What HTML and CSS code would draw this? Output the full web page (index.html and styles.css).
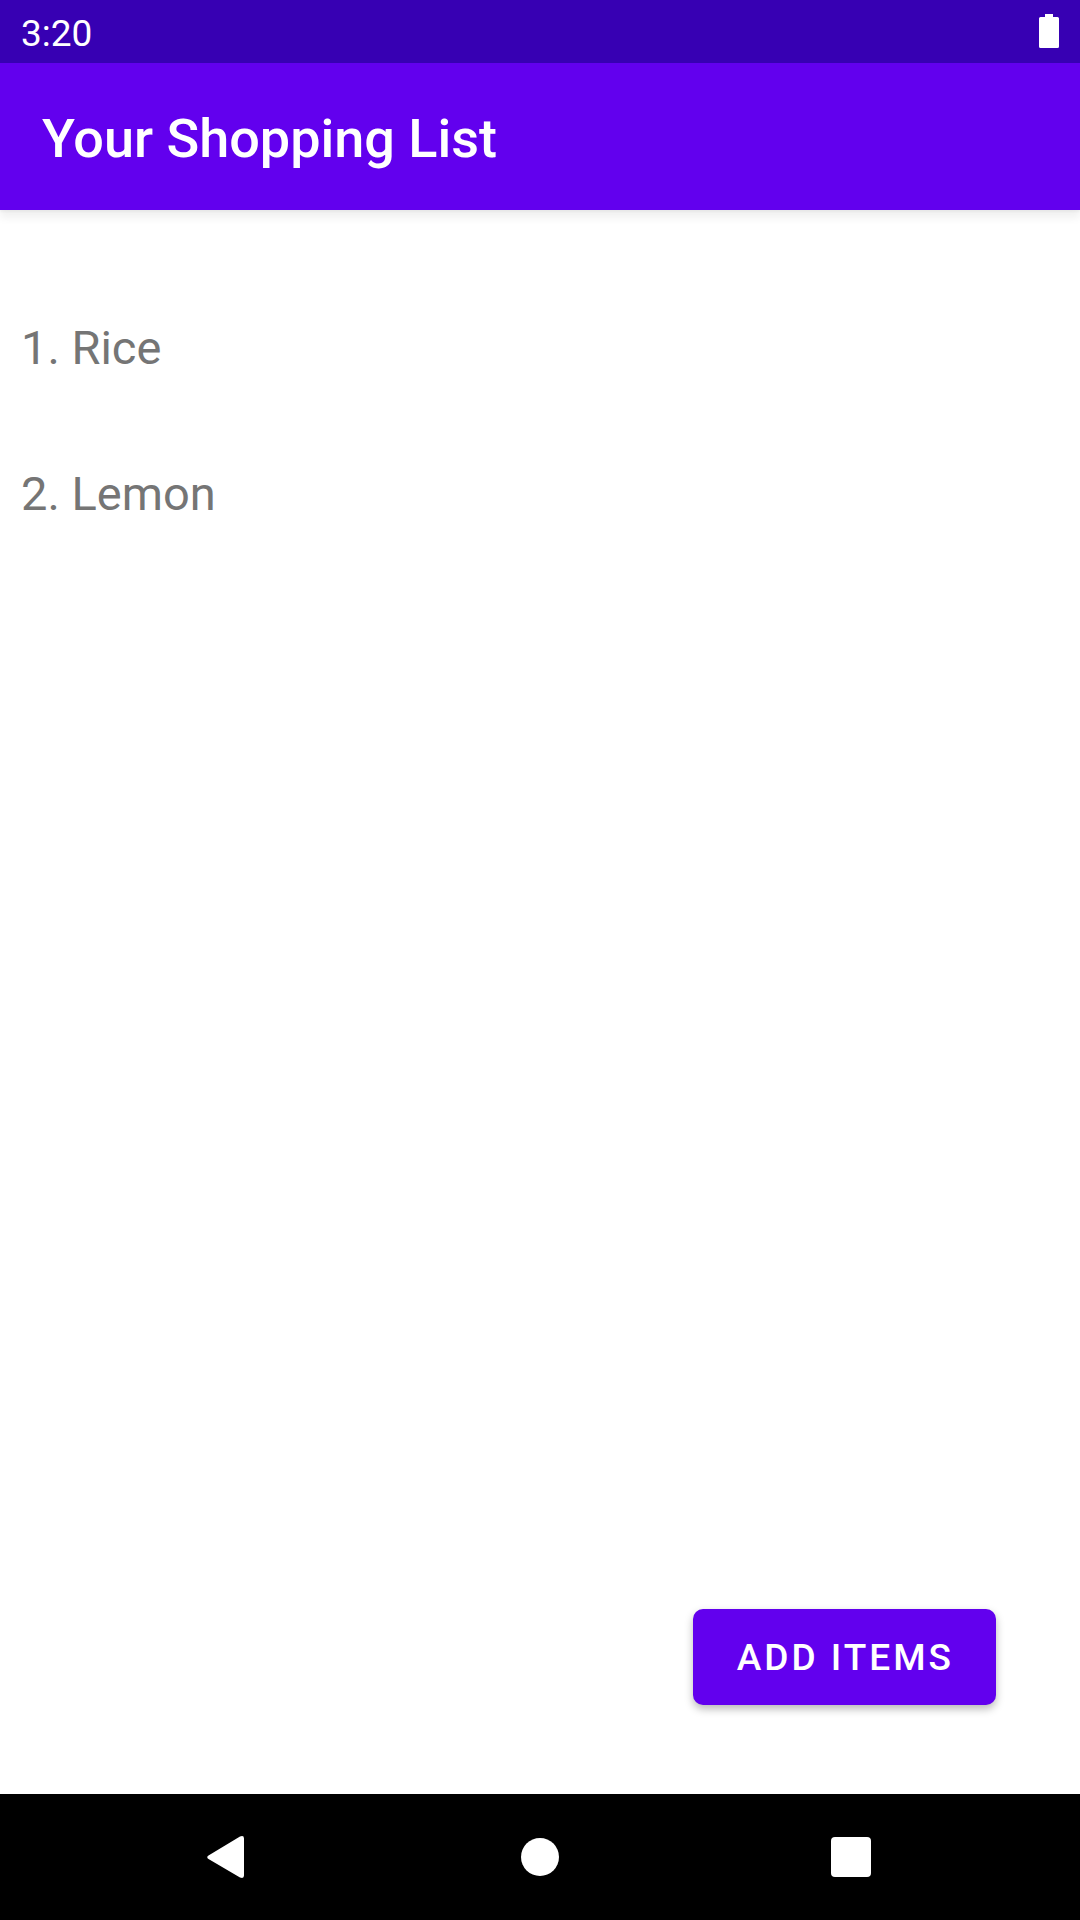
FILE: index.html
```html
<!DOCTYPE html>
<html lang="en">
<head>
<meta charset="utf-8">
<meta name="viewport" content="width=device-width, initial-scale=1">
<title>Your Shopping List</title>
<link rel="stylesheet" href="styles.css">
</head>
<body>
<div class="status-bar">
  <time class="clock">3:20</time>
  <svg class="battery" viewBox="0 0 20 34" aria-hidden="true"><path d="M6 0h8v3h4.500q1.500 0 1.500 1.500v28q0 1.500-1.500 1.500h-17q-1.500 0-1.500-1.500v-28q0-1.500 1.500-1.500h4.500z"/></svg>
</div>
<header class="app-bar">
  <h1 class="title">Your Shopping List</h1>
</header>
<main class="content">
  <ol class="items">
    <li class="item">1. Rice</li>
    <li class="item">2. Lemon</li>
  </ol>
  <button class="add-button" type="button">ADD ITEMS</button>
</main>
<nav class="nav-bar">
  <button class="nav-button" type="button" aria-label="Back">
    <svg class="nav-icon" viewBox="0 0 44 44" aria-hidden="true"><path d="M1.500 20.500 33 1.500Q37 0 37 3.500V40.500Q37 44 33 42.500L1.500 24Q-1 22 1.500 20.500z"/></svg>
  </button>
  <button class="nav-button" type="button" aria-label="Home">
    <svg class="nav-icon" viewBox="0 0 44 44" aria-hidden="true"><circle cx="22" cy="22" r="19"/></svg>
  </button>
  <button class="nav-button" type="button" aria-label="Recent apps">
    <svg class="nav-icon" viewBox="0 0 44 44" aria-hidden="true"><rect x="2" y="2" width="40" height="40" rx="4"/></svg>
  </button>
</nav>
</body>
</html>
```
FILE: styles.css
```css
* {
  box-sizing: border-box;
}

body {
  margin: 0;
  min-height: 100vh;
  display: flex;
  flex-direction: column;
  background: #fff;
  font-family: Roboto, sans-serif;
}

.status-bar {
  display: flex;
  align-items: center;
  justify-content: space-between;
  height: 63px;
  padding: 0 21px 1px;
  background: #3700b3;
  color: #fff;
}

.clock {
  padding-top: 6px;
  font-size: 37px;
  line-height: 44px;
}

.battery {
  width: 20px;
  height: 34px;
  fill: #fff;
}

.app-bar {
  display: flex;
  align-items: center;
  height: 147px;
  padding: 4px 42px 0;
  background: #6200ee;
  box-shadow: 0 8px 8px rgba(0, 0, 0, 0.06), 0 2px 2px rgba(0, 0, 0, 0.04);
  color: #fff;
}

.title {
  margin: 0;
  font-size: 54px;
  line-height: 64px;
  font-weight: 500;
}

.content {
  flex: 1;
  display: flex;
  flex-direction: column;
  justify-content: space-between;
  padding: 65px 84px 89px 21px;
}

.items {
  margin: 0;
  padding: 0;
  list-style: none;
}

.item {
  padding: 45px 0;
  color: #757575;
  font-size: 47px;
  line-height: 56px;
}

.add-button {
  align-self: flex-end;
  height: 96px;
  padding: 2px 42px 0 44px;
  border: 0;
  border-radius: 10px;
  background: #6200ee;
  box-shadow: 0 4px 8px rgba(0, 0, 0, 0.28);
  color: #fff;
  font-family: inherit;
  font-size: 37px;
  font-weight: 500;
  line-height: 44px;
  letter-spacing: 3px;
}

.nav-bar {
  display: flex;
  height: 126px;
  padding: 0 73px;
  background: #000;
}

.nav-button {
  flex: 1;
  display: flex;
  align-items: center;
  justify-content: center;
  padding: 0;
  border: 0;
  background: none;
}

.nav-icon {
  width: 44px;
  height: 44px;
  fill: #fff;
}
```
